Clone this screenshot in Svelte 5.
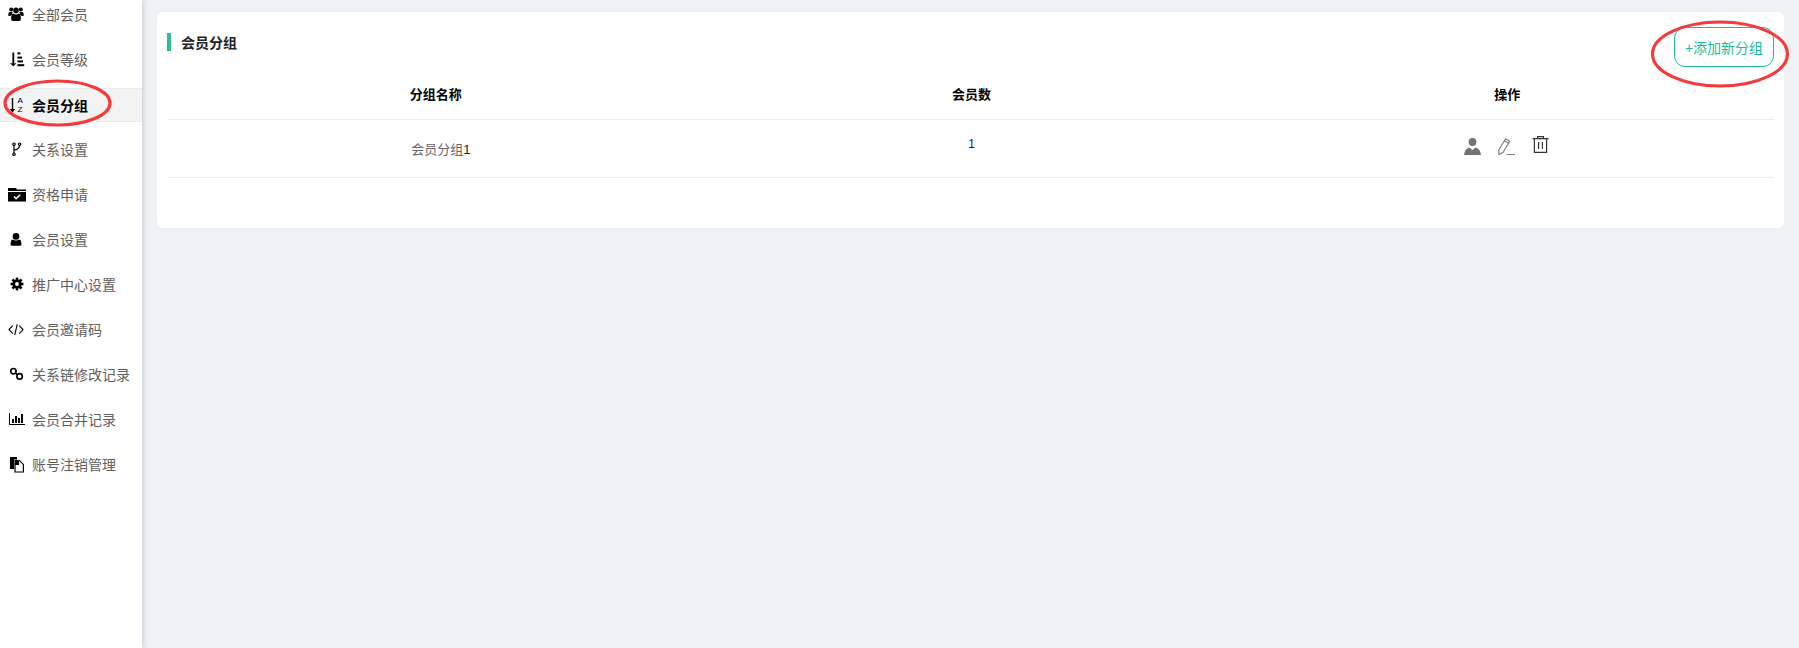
<script>
  const menu = [
    { label: "全部会员", icon: "users" },
    { label: "会员等级", icon: "sortAmount" },
    { label: "会员分组", icon: "sortAlpha", active: true },
    { label: "关系设置", icon: "fork" },
    { label: "资格申请", icon: "folder" },
    { label: "会员设置", icon: "user" },
    { label: "推广中心设置", icon: "cog" },
    { label: "会员邀请码", icon: "code" },
    { label: "关系链修改记录", icon: "link" },
    { label: "会员合并记录", icon: "chart" },
    { label: "账号注销管理", icon: "files" }
  ];
  const teeth = [0, 45, 90, 135];
</script>

<div class="page">
  <aside class="sidebar">
    <ul class="menu">
      {#each menu as item}
        <li class="menu-item" class:active={item.active}>
          <svg class="menu-icon" viewBox="0 0 16 16" aria-hidden="true">
            {#if item.icon === "users"}
              <circle cx="3.2" cy="2.4" r="2" /><circle cx="12.8" cy="2.4" r="2" /><circle cx="8" cy="3.4" r="2.8" />
              <path d="M0.4 9V6.6Q0.4 5 2 5H4.6Q4 6.2 4 7.6Q2.8 8 2.4 9ZM15.6 9V6.6Q15.6 5 14 5H11.4Q12 6.2 12 7.6Q13.2 8 13.6 9Z" />
              <path d="M3.2 12.6V9.4Q3.2 7 5.2 6.6Q8 8.4 10.8 6.6Q12.8 7 12.8 9.4V12.6Q12.8 14 11.4 14H4.6Q3.2 14 3.2 12.6Z" />
            {:else if item.icon === "sortAmount"}
              <path d="M4.4 0.4H6.2V11.2H8.4L5.3 14.4L2.2 11.2H4.4Z" /><rect x="9.4" y="0.4" width="3" height="2" /><rect x="9.4" y="4.6" width="4.6" height="2" /><rect x="9.4" y="8.4" width="5.6" height="2" /><rect x="9.4" y="12.2" width="6.8" height="2" />
            {:else if item.icon === "sortAlpha"}
              <path d="M3.8 1H5.2V12H7.2L4.5 15.4L1.8 12H3.8Z" />
              <text x="9.4" y="6.4" class="az">A</text><text x="9.6" y="15.2" class="az">Z</text>
            {:else if item.icon === "fork"}
              <g fill="none" stroke="currentColor" stroke-width="1.2"><circle cx="6" cy="2.2" r="1.2" /><circle cx="6" cy="12.2" r="1.2" /><circle cx="11.6" cy="2.2" r="1.2" /><path d="M6 3.4V11M11.6 3.4Q11.6 6.6 6.2 8.2" /></g>
            {:else if item.icon === "folder"}
              <path d="M0 1H8L9 2.5H18V4H0ZM0 5H18V14.5H0Z" /><path d="M6 9.5L8.2 11.6L12.2 7.8" fill="none" stroke="#fff" stroke-width="1.5" />
            {:else if item.icon === "user"}
              <circle cx="8" cy="4.4" r="3.3" /><path d="M2.6 12.6V10.8Q2.6 8 5 7.6Q8 9.6 11 7.6Q13.4 8 13.4 10.8V12.6Q13.4 13.8 12.2 13.8H3.8Q2.6 13.8 2.6 12.6Z" />
            {:else if item.icon === "cog"}
              {#each teeth as angle}
                <rect x="7.7" y="0.6" width="2.6" height="12.8" transform="rotate({angle} 9 7)" />
              {/each}
              <circle cx="9" cy="7" r="4.6" /><circle cx="9" cy="7" r="1.9" fill="#fff" />
            {:else if item.icon === "code"}
              <path d="M4.8 3.6L1 7.6L4.8 11.6M11.2 3.6L15 7.6L11.2 11.6M9.3 2.2L6.7 13" fill="none" stroke="currentColor" stroke-width="1.1" />
            {:else if item.icon === "link"}
              <g fill="none" stroke="currentColor" stroke-width="1.7"><circle cx="5.4" cy="4.2" r="2.7" /><circle cx="11.6" cy="9.4" r="2.7" /><path d="M7.4 6L9.6 7.6" /></g>
            {:else if item.icon === "chart"}
              <path d="M1 1H2V12H17V13H1Z" /><rect x="4" y="7" width="2" height="4" /><rect x="7" y="4" width="2" height="7" /><rect x="10" y="6" width="2" height="5" /><rect x="13" y="2" width="2" height="9" />
            {:else}
              <path d="M2 0H9V2.5H6V12H2Z" /><path d="M7 3.6H11.4L15.4 7.4V15H7Z" fill="#fff" stroke="currentColor" stroke-width="1.2" /><path d="M7 3H11V8H7Z" />
            {/if}
          </svg>
          <span>{item.label}</span>
        </li>
      {/each}
    </ul>
  </aside>

  <main class="main">
    <section class="card">
      <header class="card-head">
        <h2 class="card-title">会员分组</h2>
        <button class="add-btn">+添加新分组</button>
      </header>
      <table class="table">
        <thead>
          <tr><th>分组名称</th><th>会员数</th><th>操作</th></tr>
        </thead>
        <tbody>
          <tr>
            <td class="name">会员分组<span class="num">1</span></td>
            <td class="total"><span class="count">1</span></td>
            <td>
              <div class="actions">
                <svg viewBox="0 0 17 17" fill="#737373" aria-hidden="true">
                  <circle cx="8.5" cy="4" r="3.9" /><path d="M0 17Q0.6 10.6 5.4 9.4L8.5 12L11.6 9.4Q16.4 10.6 17 17Z" />
                </svg>
                <svg viewBox="0 0 17 17" aria-hidden="true">
                  <path d="M0.8 12L7.6 0.8L11.8 3.2L5 14.5L0.8 16.4ZM6.4 2.8L10.6 5.2" fill="none" stroke="#808080" stroke-width="1.2" />
                  <rect x="8.5" y="16" width="8.5" height="1" fill="#808080" />
                </svg>
                <svg viewBox="0 0 17 17" fill="none" stroke="#333" stroke-width="1.2" aria-hidden="true">
                  <path d="M0.5 2.6H16.5M5.6 2.6V0.7H11.4V2.6M2.4 2.6V16.4H14.6V2.6M6.6 6V13M10.4 6V13" />
                </svg>
              </div>
            </td>
          </tr>
        </tbody>
      </table>
    </section>
  </main>

  <svg class="marks" viewBox="0 0 1799 648" aria-hidden="true">
    <ellipse cx="57.5" cy="103" rx="52.5" ry="22" />
    <ellipse cx="1720" cy="54" rx="67.5" ry="32" />
  </svg>
</div>

<style>
  :global(body) {
    margin: 0;
    background: #eff2f5;
  }

  .page {
    display: flex;
    height: 648px;
    overflow: hidden;
    font-family: "Liberation Sans", "Noto Sans CJK SC", sans-serif;
  }

  .sidebar {
    width: 142px;
    flex-shrink: 0;
    background: #fff;
    box-shadow: 1px 0 5px rgba(90, 110, 140, 0.3);
    z-index: 1;
  }

  .menu {
    list-style: none;
    margin: -2px 0 0;
    padding: 0;
    display: flex;
    flex-direction: column;
    gap: 11px;
  }

  .menu-item {
    height: 34px;
    display: flex;
    align-items: center;
    gap: 8px;
    padding-left: 8px;
    box-sizing: border-box;
    font-size: 14px;
    color: #606060;
  }

  .menu-item span {
    margin-top: -2px;
  }

  .menu-item.active {
    background: #f3f3f4;
    border-top: 1px solid #eaeaea;
    border-bottom: 1px solid #eaeaea;
    color: #000;
    font-weight: 700;
  }

  .menu-item.active span {
    margin-top: 0;
  }

  .menu-icon {
    width: 16px;
    height: 16px;
    flex-shrink: 0;
    color: #000;
    fill: currentColor;
    overflow: visible;
  }

  .az {
    font-size: 8px;
    font-weight: 400;
    font-family: "Liberation Sans", sans-serif;
  }

  .main {
    flex: 1;
    padding: 12px 15px;
    min-width: 0;
  }

  .card {
    height: 216px;
    box-sizing: border-box;
    padding: 15px 10px 0 10px;
    background: #fff;
    border-radius: 6px;
  }

  .card-head {
    height: 40px;
    display: flex;
    justify-content: space-between;
    align-items: flex-start;
  }

  .card-title {
    margin: 6px 0 0;
    padding-left: 10px;
    border-left: 4px solid #2dbc9b;
    height: 18px;
    line-height: 20px;
    font-size: 14px;
    font-weight: 700;
    color: #222;
  }

  .add-btn {
    width: 100px;
    height: 40px;
    padding: 0;
    border: 1px solid #1abc9c;
    border-radius: 11px;
    background: #fff;
    color: #1abc9c;
    font-family: inherit;
    font-size: 14px;
  }

  .table {
    width: 100%;
    table-layout: fixed;
    border-collapse: collapse;
    font-size: 13px;
  }

  th {
    height: 52px;
    padding: 2px 0 0 2px;
    box-sizing: border-box;
    font-weight: 700;
    color: #000;
    border-bottom: 1px solid #eee;
  }

  td {
    height: 57px;
    padding: 0;
    text-align: center;
    color: #666;
    border-bottom: 1px solid #eee;
  }

  td.name {
    padding-left: 12px;
  }

  td.total {
    padding-left: 2px;
  }

  .num,
  .count {
    color: #222;
  }

  .count {
    position: relative;
    top: -5px;
    font-size: 12px;
  }

  .actions {
    display: flex;
    justify-content: center;
    gap: 17px;
    align-items: flex-start;
    transform: translateY(-2px);
  }

  .actions svg {
    width: 17px;
    height: 17px;
  }

  .actions svg:last-child {
    margin-top: -2px;
  }

  .marks {
    position: absolute;
    left: 0;
    top: 0;
    width: 1799px;
    height: 648px;
    z-index: 2;
    pointer-events: none;
    fill: none;
    stroke: #f43a3a;
    stroke-width: 3.2;
  }
</style>
